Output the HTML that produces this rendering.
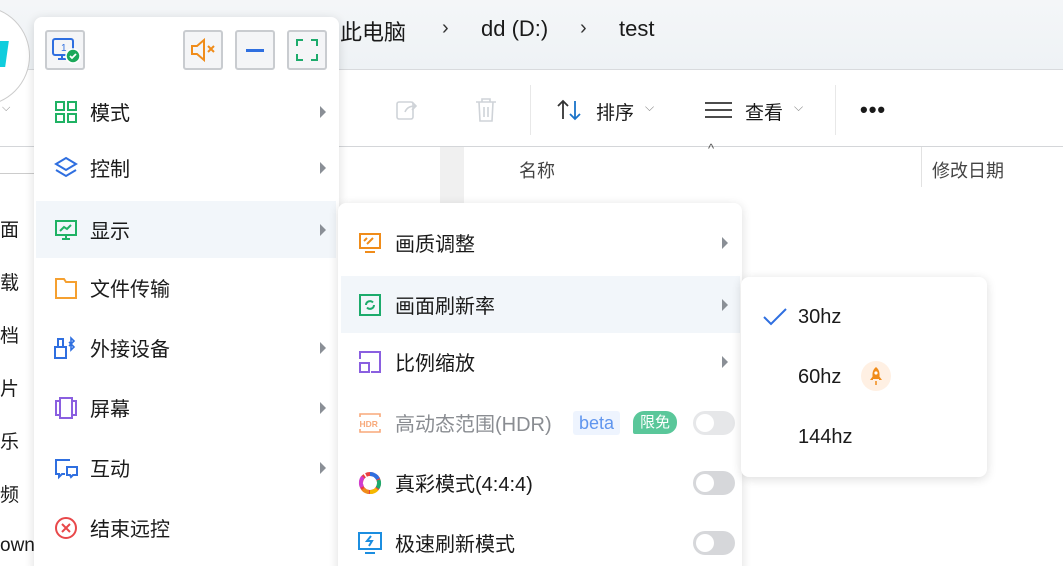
<!DOCTYPE html>
<html><head><meta charset="utf-8"><style>
*{margin:0;padding:0;box-sizing:border-box}
html,body{width:1063px;height:566px;overflow:hidden}
body{background:#fff;position:relative;font-family:"Liberation Sans","Noto Sans CJK SC",sans-serif;color:#1a1a1a}
.abs{position:absolute}
.menu{position:absolute;background:#fff;border-radius:8px;box-shadow:0 2px 10px rgba(0,0,0,.14)}
.it{position:absolute;left:0;right:0;height:57px;display:flex;align-items:center;font-size:20px}
.it .ic{position:absolute;width:24px;height:24px}
.it .tx{position:absolute}
.arr{position:absolute;width:0;height:0;border-left:6px solid #8a8f96;border-top:6px solid transparent;border-bottom:6px solid transparent}
.hl{background:#f2f6fa}
.btn{position:absolute;top:13px;width:40px;height:40px;border:2px solid #c9ccd0;border-radius:3px;background:#f4f5f7}
.tog{position:absolute;width:42px;height:24px;border-radius:12px;background:#d6d7da}
.tog:after{content:"";position:absolute;left:3px;top:3px;width:18px;height:18px;border-radius:50%;background:#fff}
</style></head><body>
<div class="abs" style="left:0;top:0;width:1063px;height:69px;background:linear-gradient(#f4f6f8,#eef2f5)"></div>
<div class="abs" style="left:0;top:69px;width:1063px;height:1px;background:#d8dadd"></div>
<div class="abs" style="left:0;top:146px;width:1063px;height:1px;background:#d4d6d9"></div>
<div class="abs" style="left:340px;top:15px;font-size:22px;color:#1a1a1a">此电脑</div>
<div class="abs" style="left:442px;top:17px;font-size:20px;color:#333">›</div>
<div class="abs" style="left:481px;top:16px;font-size:22px;color:#1a1a1a">dd (D:)</div>
<div class="abs" style="left:580px;top:17px;font-size:20px;color:#333">›</div>
<div class="abs" style="left:619px;top:16px;font-size:22px;color:#1a1a1a">test</div>
<svg class="abs" style="left:393px;top:96px" width="28" height="28" viewBox="0 0 28 28" fill="none" stroke="#cfd3d8" stroke-width="1.6"><rect x="4" y="6" width="16" height="17" rx="2"/><path d="M12 16c2-5 6-6 11-6M19 6l4 4-4 4"/></svg>
<svg class="abs" style="left:473px;top:95px" width="26" height="30" viewBox="0 0 26 30" fill="none" stroke="#cfd3d8" stroke-width="1.6"><path d="M3 7h20M9 7V4h8v3M6 7l1 19h12l1-19M11 12v10M15 12v10"/></svg>
<div class="abs" style="left:530px;top:85px;width:1px;height:50px;background:#e8e8e8"></div>
<svg class="abs" style="left:555px;top:97px" width="30" height="26" viewBox="0 0 30 26" fill="none" stroke-width="1.8"><path d="M8 22V4M3 9l5-5 5 5" stroke="#333"/><path d="M20 4v18M15 17l5 5 5-5" stroke="#1a73c8"/></svg>
<div class="abs" style="left:596px;top:98px;font-size:19px">排序</div>
<div class="abs" style="left:645px;top:100px;font-size:12px;color:#888">⌵</div>
<svg class="abs" style="left:704px;top:100px" width="30" height="20" viewBox="0 0 30 20" stroke="#333" stroke-width="1.8"><path d="M1 3h27M1 10h27M1 17h27"/></svg>
<div class="abs" style="left:745px;top:98px;font-size:19px">查看</div>
<div class="abs" style="left:794px;top:100px;font-size:12px;color:#888">⌵</div>
<div class="abs" style="left:835px;top:85px;width:1px;height:50px;background:#e8e8e8"></div>
<div class="abs" style="left:860px;top:97px;font-size:22px;font-weight:bold;letter-spacing:1px">•••</div>
<div class="abs" style="left:440px;top:147px;width:24px;height:419px;background:#f0f0f0"></div>
<div class="abs" style="left:708px;top:141px;font-size:13px;color:#555">^</div>
<div class="abs" style="left:519px;top:157px;font-size:18px;color:#444">名称</div>
<div class="abs" style="left:921px;top:147px;width:1px;height:40px;background:#e2e2e2"></div>
<div class="abs" style="left:932px;top:157px;font-size:18px;color:#444">修改日期</div>
<div class="abs" style="left:0;top:173px;width:60px;height:1px;background:#ccc"></div>
<div class="abs" style="left:-70px;top:6px;width:100px;height:100px;border-radius:50%;border:1.5px solid #ccc;background:#fff;overflow:hidden"><div style="position:absolute;left:62px;top:34px;width:14px;height:26px;background:#10cddd;transform:skewX(-8deg)"></div></div>
<div class="abs" style="left:2px;top:102px;font-size:11px;color:#888">⌵</div>
<div class="abs" style="left:0;top:215px;font-size:19px">面</div>
<div class="abs" style="left:0;top:268px;font-size:19px">载</div>
<div class="abs" style="left:0;top:321px;font-size:19px">档</div>
<div class="abs" style="left:0;top:374px;font-size:19px">片</div>
<div class="abs" style="left:0;top:427px;font-size:19px">乐</div>
<div class="abs" style="left:0;top:480px;font-size:19px">频</div>
<div class="abs" style="left:0;top:535px;font-size:19px">own</div>

<div class="menu" style="left:34px;top:17px;width:305px;height:560px">
<div class="btn" style="left:11px"><svg width="36" height="36" viewBox="0 0 36 36" style="position:absolute;left:0;top:0" fill="none"><rect x="6" y="7" width="20" height="16" rx="2" stroke="#2f6fe0" stroke-width="2"/><path d="M11 27h8M15 23v4" stroke="#2f6fe0" stroke-width="2"/><text x="14" y="19" font-size="10" fill="#2f6fe0" font-family="Liberation Sans">1</text><circle cx="26" cy="24" r="7" fill="#1ba85a" stroke="#fff" stroke-width="1.5"/><path d="M23 24l2 2 4-4" stroke="#fff" stroke-width="1.8"/></svg></div>
<div class="btn" style="left:149px"><svg width="36" height="36" viewBox="0 0 36 36" style="position:absolute;left:0;top:0" fill="none" stroke="#f08c1a" stroke-width="2"><path d="M7 14h5l7-6v20l-7-6H7z"/><path d="M23 14l6 6M29 14l-6 6"/></svg></div>
<div class="btn" style="left:201px"><div style="position:absolute;left:9px;top:17px;width:18px;height:2.5px;background:#2f6fe0"></div></div>
<div class="btn" style="left:253px"><svg width="36" height="36" viewBox="0 0 36 36" style="position:absolute;left:0;top:0" fill="none" stroke="#1dab6c" stroke-width="2"><path d="M8 14V8h6M22 8h6v6M28 22v6h-6M14 28H8v-6"/></svg></div>

<div class="it" style="top:66px"><svg class="ic" style="left:20px" viewBox="0 0 24 24" fill="none" stroke="#20b264" stroke-width="2"><rect x="2" y="2" width="8" height="8"/><rect x="14" y="2" width="8" height="8"/><rect x="2" y="14" width="8" height="8"/><rect x="14" y="14" width="8" height="8"/></svg><span class="tx" style="left:56px">模式</span><i class="arr" style="left:286px"></i></div>
<div class="it" style="top:122px"><svg class="ic" style="left:20px" viewBox="0 0 24 24" fill="none" stroke="#2f6fe0" stroke-width="2"><path d="M12 2l10 6-10 6-10-6z"/><path d="M2 14l10 6 10-6"/></svg><span class="tx" style="left:56px">控制</span><i class="arr" style="left:286px"></i></div>
<div class="it hl" style="top:184px;left:2px;right:3px"><svg class="ic" style="left:18px" viewBox="0 0 24 24" fill="none" stroke="#20b264" stroke-width="2"><rect x="2" y="3" width="20" height="14"/><path d="M6 13l4-4 3 2 4-4M8 21h8M12 17v4"/></svg><span class="tx" style="left:54px">显示</span><i class="arr" style="left:284px"></i></div>
<div class="it" style="top:242px"><svg class="ic" style="left:20px" viewBox="0 0 24 24" fill="none" stroke="#f5a030" stroke-width="2"><path d="M2 3h8l2 3h10v16H2z"/></svg><span class="tx" style="left:56px">文件传输</span></div>
<div class="it" style="top:302px"><svg class="ic" style="left:20px" viewBox="0 0 24 24" fill="none" stroke="#2f6fe0" stroke-width="2"><rect x="1" y="11" width="11" height="11"/><path d="M4 11V3h5v8"/><path d="M15 6l5 5-3 3V2l3 3-5 5" stroke-width="1.6"/></svg><span class="tx" style="left:56px">外接设备</span><i class="arr" style="left:286px"></i></div>
<div class="it" style="top:362px"><svg class="ic" style="left:20px" viewBox="0 0 24 24" fill="none" stroke="#8a5fe0" stroke-width="2"><rect x="6" y="2" width="12" height="20"/><path d="M6 5H2v14h4M18 5h4v14h-4"/></svg><span class="tx" style="left:56px">屏幕</span><i class="arr" style="left:286px"></i></div>
<div class="it" style="top:422px"><svg class="ic" style="left:20px" viewBox="0 0 24 24" fill="none" stroke="#2f6fe0" stroke-width="2"><path d="M16 4H2v14h3v3l3-3h3"/><path d="M13 11h10v8h-4l-2 2-1-2h-3z"/></svg><span class="tx" style="left:56px">互动</span><i class="arr" style="left:286px"></i></div>
<div class="it" style="top:482px"><svg class="ic" style="left:20px" viewBox="0 0 24 24" fill="none" stroke="#e8484a" stroke-width="2"><circle cx="12" cy="12" r="10"/><path d="M8 8l8 8M16 8l-8 8"/></svg><span class="tx" style="left:56px">结束远控</span></div>
</div>

<div class="menu" style="left:338px;top:203px;width:404px;height:380px">
<div class="it" style="top:11px"><svg class="ic" style="left:20px" viewBox="0 0 24 24" fill="none" stroke="#f08c1a" stroke-width="2"><rect x="2" y="3" width="20" height="14"/><path d="M6 10l3-3M9 13l6-6M7 21h10"/></svg><span class="tx" style="left:57px">画质调整</span><i class="arr" style="left:384px"></i></div>
<div class="it hl" style="top:73px;left:3px;right:2px"><svg class="ic" style="left:17px" viewBox="0 0 24 24" fill="none" stroke="#1dab6c" stroke-width="2"><rect x="2" y="2" width="20" height="20"/><path d="M8 12a4 4 0 0 1 7-2.5M16 12a4 4 0 0 1-7 2.5"/></svg><span class="tx" style="left:54px">画面刷新率</span><i class="arr" style="left:381px"></i></div>
<div class="it" style="top:130px"><svg class="ic" style="left:20px" viewBox="0 0 24 24" fill="none" stroke="#8a5fe0" stroke-width="2"><path d="M2 9V2h20v20h-9"/><rect x="2" y="13" width="9" height="9"/></svg><span class="tx" style="left:57px">比例缩放</span><i class="arr" style="left:384px"></i></div>
<div class="it" style="top:191px;color:#8a8d92"><svg class="ic" style="left:20px" viewBox="0 0 24 24" fill="none" stroke="#f8a97a" stroke-width="1.6"><path d="M2 6V3h20v3M2 18v3h20v-3"/><text x="1.5" y="16" font-size="8.5" font-weight="bold" fill="#f8a97a" stroke="none" font-family="Liberation Sans">HDR</text></svg><span class="tx" style="left:57px">高动态范围(HDR)</span><span class="abs" style="left:235px;top:17px;height:24px;padding:0 6px;background:#eef4fe;color:#5f95ee;font-size:18px;line-height:24px;border-radius:3px">beta</span><span class="abs" style="left:295px;top:17px;height:23px;padding:0 7px;background:#5ac79a;color:#fff;font-size:15px;line-height:23px;border-radius:11px 11px 11px 2px">限免</span><i class="tog" style="left:355px;top:17px;background:#e6e7e9"></i></div>
<div class="it" style="top:251px"><svg class="ic" style="left:20px" viewBox="0 0 24 24" fill="none" stroke-width="4"><circle cx="12" cy="12" r="9" stroke="#e94040" stroke-dasharray="8 1.5"/><path d="M12 3a9 9 0 0 1 8 5" stroke="#2f6fe0"/><path d="M20.5 9a9 9 0 0 1-1 8" stroke="#1dab6c"/><path d="M19 18a9 9 0 0 1-7 3" stroke="#f5b800"/><path d="M11 21a9 9 0 0 1-6-3" stroke="#f08c1a"/><path d="M4 16a9 9 0 0 1 1-10" stroke="#d03cd0"/></svg><span class="tx" style="left:57px">真彩模式(4:4:4)</span><i class="tog" style="left:355px;top:17px"></i></div>
<div class="it" style="top:311px"><svg class="ic" style="left:20px" viewBox="0 0 24 24" fill="none" stroke="#1c8ee0" stroke-width="2"><rect x="1" y="2" width="22" height="16"/><path d="M13 5l-4 5h5l-3 5" stroke-width="2"/><path d="M7 22h10"/></svg><span class="tx" style="left:57px">极速刷新模式</span><i class="tog" style="left:355px;top:17px"></i></div>
</div>

<div class="menu" style="left:741px;top:277px;width:246px;height:200px">
<svg class="abs" style="left:22px;top:30px" width="24" height="20" viewBox="0 0 24 20" fill="none" stroke="#2f6fe0" stroke-width="2"><path d="M1 10l7 7L23 2"/></svg>
<div class="abs" style="left:57px;top:29px;font-size:20px">30hz</div>
<div class="abs" style="left:57px;top:89px;font-size:20px">60hz</div>
<div class="abs" style="left:120px;top:84px;width:30px;height:30px;border-radius:50%;background:#fff0e3"><svg width="30" height="30" viewBox="0 0 30 30"><path d="M15 6c4 3 4 8 3 12h-6c-1-4-1-9 3-12z" fill="#f08c1a"/><path d="M12 15l-3 4h3zM18 15l3 4h-3z" fill="#f08c1a"/><circle cx="15" cy="12" r="1.6" fill="#fff"/><path d="M15 20v4" stroke="#f08c1a" stroke-width="1.5"/></svg></div>
<div class="abs" style="left:57px;top:149px;font-size:20px">144hz</div>
</div>
</body></html>
